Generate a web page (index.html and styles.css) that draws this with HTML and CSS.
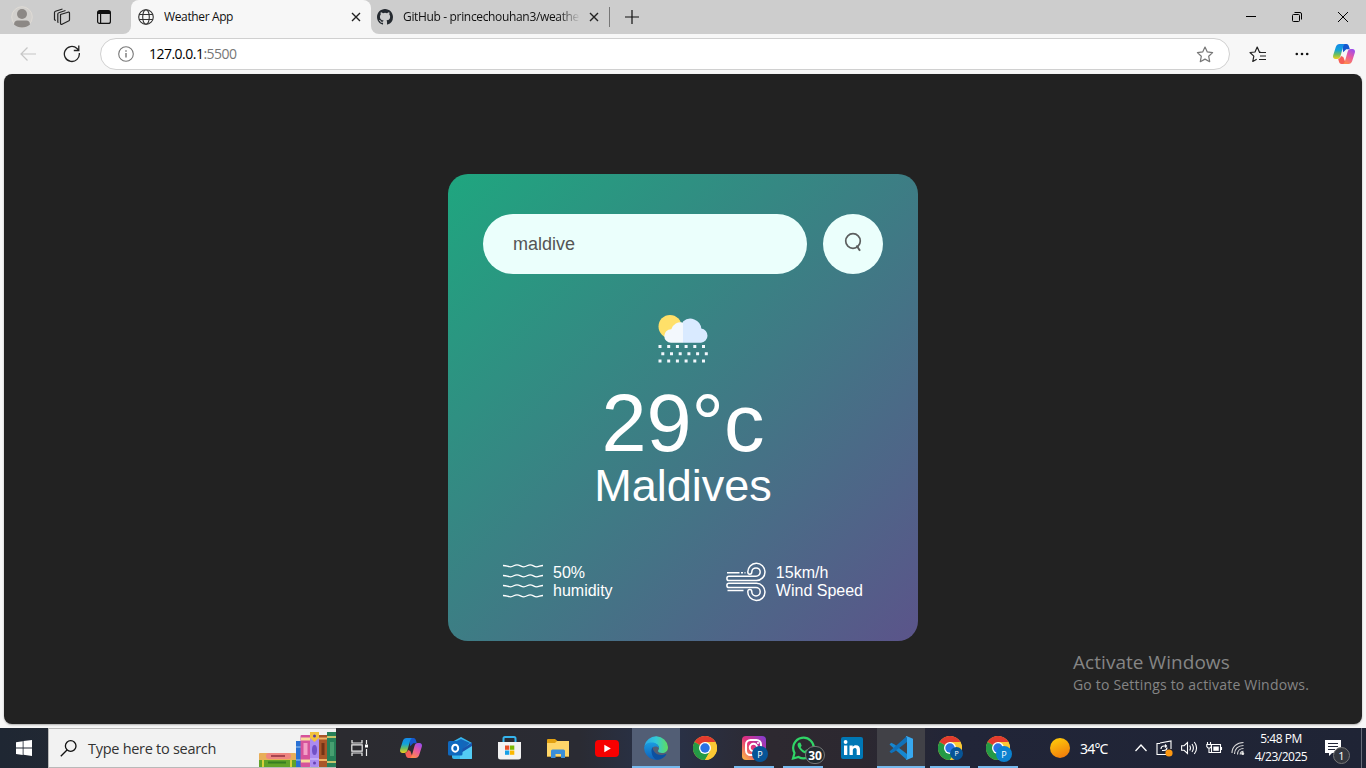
FILE: index.html
```html
<!DOCTYPE html>
<html lang="en">
<head>
<meta charset="utf-8">
<title>Weather App</title>
<link rel="stylesheet" href="styles.css">
</head>
<body>
<svg class="defs" width="0" height="0">
  <defs>
    <linearGradient id="cpA" x1="0" y1="0" x2="0" y2="1"><stop offset="0" stop-color="#1689e8"/><stop offset=".4" stop-color="#12a3d8"/><stop offset=".7" stop-color="#6fbe5c"/><stop offset="1" stop-color="#f2cf1d"/></linearGradient>
    <linearGradient id="cpB" x1=".8" y1="0" x2=".3" y2="1"><stop offset="0" stop-color="#9a4cf0"/><stop offset=".5" stop-color="#e95a9e"/><stop offset="1" stop-color="#ff8a4c"/></linearGradient>
    <linearGradient id="ig" x1="1" y1="0" x2="0" y2="1"><stop offset="0" stop-color="#7a3fd8"/><stop offset=".5" stop-color="#e0307c"/><stop offset="1" stop-color="#ffc140"/></linearGradient>
    <linearGradient id="edgeA" x1="0" y1="0" x2="1" y2="0"><stop offset="0" stop-color="#2aa7e6"/><stop offset=".5" stop-color="#33c9d8"/><stop offset="1" stop-color="#5fdc5c"/></linearGradient>
    <linearGradient id="edgeB" x1="0" y1="0" x2="0" y2="1"><stop offset="0" stop-color="#1a9be0"/><stop offset="1" stop-color="#1160b8"/></linearGradient>
    <linearGradient id="sun" x1=".3" y1="0" x2=".7" y2="1"><stop offset="0" stop-color="#ffc90a"/><stop offset="1" stop-color="#f07a0c"/></linearGradient>
  </defs>
  <symbol id="copilot" viewBox="0 0 22 20">
    <path fill="#1558cf" d="M9 0h4.500c1.500 0 2 1 2.500 2.500l.8 2.700h-3.600l-3 3z"/>
    <path fill="url(#cpA)" d="M6.500 0H12c-1 .5-1.500 1.500-2 3L7.500 12c-.6 2-1.500 3-3.300 3H2.500C.5 15-.4 13.500.2 11.300L2.800 3C3.500 1 4.700 0 6.500 0z"/>
    <path fill="#f65f56" d="M13 20H8.500C7 20 6.300 19 5.900 17.500L5.200 15c1.600-.3 2.300-1.500 2.800-3l2.300 1z"/>
    <path fill="url(#cpB)" d="M15.500 20H10c1-.5 1.500-1.500 2-3l2.500-9c.6-2 1.500-3 3.300-3h1.700c2 0 2.900 1.500 2.300 3.700L19.200 17c-.7 2-1.900 3-3.700 3z"/>
  </symbol>
  <symbol id="chrome" viewBox="0 0 24 24">
    <circle cx="12" cy="12" r="12" fill="#fcc934"/>
    <path fill="#e33b2e" d="M12 12 1.600 6A12 12 0 0 1 22.400 6z"/>
    <path fill="#249a46" d="M1.600 6A12 12 0 0 0 12 24l5.200-9L12 12z"/>
    <path fill="#fcc934" d="M22.400 6H12v6l5.200 3L12 24A12 12 0 0 0 22.400 6z"/>
    <circle cx="12" cy="12" r="6" fill="#fff"/><circle cx="12" cy="12" r="4.700" fill="#2a72e5"/>
  </symbol>
</svg>

<header class="titlebar">
  <div class="title-tools">
    <svg width="22" height="22" viewBox="0 0 22 22"><circle cx="11" cy="11" r="10.300" fill="#d2d0cd" stroke="#dfdbd5"/><circle cx="11" cy="8" r="5" fill="#8c8885"/><path d="M3 18.500c.3-3 1.500-4 3.500-4h9c2 0 3.200 1 3.500 4-4 4-12 4-16 0z" fill="#8c8885"/></svg>
    <svg width="18" height="18" viewBox="0 0 18 18" fill="none" stroke="#222" stroke-width="1.200" stroke-linejoin="round"><path d="M7.500 6.500 15 4.200q1.500-.4 1.500 1v6.500q0 1-1 1.300L9 16.300q-1.500.4-1.500-1z"/><path d="m5.500 14.500-.7-.3V6q0-1 1-1.300L12.500 2.500"/><path d="m2.800 12.500-1.300-.8V4.500q0-1 1-1.300L9.500 1"/></svg>
    <svg width="16" height="16" viewBox="0 0 16 16" fill="none" stroke="#111" stroke-width="1.200"><rect x="1.600" y="1.600" width="12.800" height="12.800" rx="2"/><path d="M2 3.500h12" stroke-width="3"/><path d="M4.600 5v9"/></svg>
  </div>
  <div class="tab active">
    <svg width="16" height="16" viewBox="0 0 16 16" fill="none" stroke="#333" stroke-width="1.100"><circle cx="8" cy="8" r="7.300"/><ellipse cx="8" cy="8" rx="3.300" ry="7.300"/><path d="M1.200 5.500h13.600M1.200 10.500h13.600"/></svg>
    <span class="tab-label">Weather App</span>
    <svg class="x" width="10" height="10" viewBox="0 0 10 10"><path d="m1 1 8 8M9 1 1 9" stroke="#222" stroke-width="1.400"/></svg>
  </div>
  <div class="tab">
    <svg width="16" height="16" viewBox="0 0 16 16"><path fill="#24292f" d="M8 0C3.580 0 0 3.580 0 8c0 3.540 2.290 6.530 5.470 7.590.4.070.55-.17.55-.38v-1.490c-2.010.37-2.530-.49-2.690-.94-.09-.23-.48-.94-.82-1.130-.28-.15-.68-.52-.01-.53.63-.01 1.080.58 1.230.82.72 1.210 1.870.87 2.330.66.07-.52.28-.87.51-1.070-1.780-.2-3.640-.89-3.640-3.950 0-.87.31-1.590.82-2.150-.08-.2-.36-1.020.08-2.120 0 0 .67-.21 2.200.82a7.600 7.600 0 0 1 4 0c1.530-1.040 2.200-.82 2.200-.82.44 1.100.16 1.920.08 2.120.51.56.82 1.270.82 2.150 0 3.070-1.870 3.750-3.650 3.950.29.25.54.73.54 1.480v2.200c0 .21.15.46.55.38A8 8 0 0 0 16 8c0-4.420-3.580-8-8-8z"/></svg>
    <span class="tab-label long">GitHub - princechouhan3/weather</span>
    <svg class="x" width="10" height="10" viewBox="0 0 10 10"><path d="m1 1 8 8M9 1 1 9" stroke="#222" stroke-width="1.400"/></svg>
  </div>
  <div class="newtab"><svg width="14" height="14" viewBox="0 0 14 14"><path d="M7 0v14M0 7h14" stroke="#111" stroke-width="1.200"/></svg></div>
  <div class="win-buttons">
    <svg width="10" height="10" viewBox="0 0 10 10"><path d="M0 4.500h10" stroke="#000"/></svg>
    <svg width="10" height="10" viewBox="0 0 10 10" fill="none" stroke="#000"><rect x=".5" y="2.500" width="7" height="7" rx="1"/><path d="M2.500.5H8q1.500 0 1.500 1.500v5.500"/></svg>
    <svg width="10" height="10" viewBox="0 0 10 10"><path d="m0 0 10 10M10 0 0 10" stroke="#000"/></svg>
  </div>
</header>

<nav class="toolbar">
  <svg class="back" width="16" height="14" viewBox="0 0 16 14" fill="none" stroke="#c6c6c6" stroke-width="1.200"><path d="M16 7H1M7.500.5 1 7l6.500 6.500"/></svg>
  <svg class="reload" width="18" height="18" viewBox="0 0 18 18" fill="none" stroke="#222" stroke-width="1.300"><path d="M16.300 8A7.500 7.500 0 1 1 14 3.500l1.500 1.500M15.800.5V5.500h-5"/></svg>
  <div class="address">
    <svg width="16" height="16" viewBox="0 0 16 16" fill="none" stroke="#777" stroke-width="1.100"><circle cx="8" cy="8" r="7.300"/><path d="M8 7v4.500M8 4.300v1.400" stroke-width="1.400"/></svg>
    <span class="url">127.0.0.1<span class="port">:5500</span></span>
    <svg class="star" width="18" height="17" viewBox="0 0 18 17" fill="none" stroke="#777" stroke-width="1.200" stroke-linejoin="round"><path d="m9 1 2.300 4.900 5.300.7-3.900 3.700 1 5.400L9 13.100l-4.700 2.600 1-5.400L1.400 6.600l5.300-.7z"/></svg>
  </div>
  <svg class="favs" width="17" height="17" viewBox="0 0 17 17" fill="none" stroke="#222" stroke-width="1.200" stroke-linejoin="round"><path d="M11.500 6H10.400L8.200 1 6 6 1 6.500l3.800 3.600-1 5.400 3.900-2.200M10 6.500h7M11 10h6M10 13.500h7"/></svg>
  <svg class="dots" width="14" height="4" viewBox="0 0 14 4" fill="#111"><circle cx="1.800" cy="2" r="1.300"/><circle cx="7" cy="2" r="1.300"/><circle cx="12.200" cy="2" r="1.300"/></svg>
  <svg class="cp" width="22" height="20"><use href="#copilot"/></svg>
</nav>

<main class="page">
  <section class="card">
    <div class="search">
      <div class="field">maldive</div>
      <div class="go"><svg width="18" height="20" viewBox="0 0 18 20" fill="none" stroke="#5c5f5f" stroke-width="1.700"><circle cx="9" cy="9" r="7.300"/><path d="m12.500 13.500 3.500 5.300" stroke-width="2"/></svg></div>
    </div>
    <svg class="condition" width="50" height="50" viewBox="0 0 50 50">
      <circle cx="12" cy="12.500" r="11.500" fill="#ffe069"/>
      <path fill="#d9eaff" d="M25 28.800V7.500A11 11 0 0 1 43.300 14.500a7.200 7.200 0 0 1-.3 14.300z"/>
      <path fill="#f3f8fd" d="M25 28.800H13a6.700 6.700 0 0 1 0-13.500h.3A10 10 0 0 1 25 8.500z"/>
      <g stroke="#f3f8fd" stroke-width="3"><path stroke-dasharray="3 5.700" d="M.5 32.500h49"/><path stroke-dasharray="3 5.700" d="M3.300 39.700H50"/><path stroke-dasharray="3 5.700" d="M.5 47h49"/></g>
    </svg>
    <h1 class="temp">29°c</h1>
    <h2 class="city">Maldives</h2>
    <div class="details">
      <div class="detail">
        <svg width="40" height="40" viewBox="0 0 40 40" fill="none" stroke="#fff" stroke-width="1.300"><path d="M0 3.500c4 0 4.500 1.300 7.500 1.300S11 2.800 14 2.800s4 2 6.800 2 3.700-2 6.500-2 3.500 2 6.200 2S37 3.500 40 3.500"/><path d="M0 13.500c4 0 4.500 1.300 7.500 1.300s3.500-2 6.500-2 4 2 6.800 2 3.700-2 6.500-2 3.500 2 6.200 2S37 13.500 40 13.500"/><path d="M0 23.500c4 0 4.500 1.300 7.500 1.300s3.500-2 6.500-2 4 2 6.800 2 3.700-2 6.500-2 3.500 2 6.200 2S37 23.500 40 23.500"/><path d="M0 33.500c4 0 4.500 1.300 7.500 1.300s3.500-2 6.500-2 4 2 6.800 2 3.700-2 6.500-2 3.500 2 6.200 2S37 33.500 40 33.500"/></svg>
        <p>50%<br>humidity</p>
      </div>
      <div class="detail">
        <svg width="40" height="40" viewBox="0 0 40 40" fill="none" stroke="#fff" stroke-width="1.500"><path d="M1 10.700h12.500M15 10.700h2M18.500 10.700h1M1.500 28.500h16"/><path d="M3 14.300h27a4.200 4.200 0 1 0-4.200-4.200c0 1.300-.8 2.200-2 2.200s-2-.9-2-2.200A8.600 8.600 0 1 1 30.500 18.500H3a2.100 2.100 0 0 1 0-4.200z"/><path d="M3 25.500h27a4.200 4.200 0 1 1-4.200 4.200c0-1.300-.8-2.200-2-2.200s-2 .9-2 2.200A8.600 8.600 0 1 0 30.500 21.300H3a2.100 2.100 0 0 0 0 4.200z"/></svg>
        <p>15km/h<br>Wind Speed</p>
      </div>
    </div>
  </section>
  <aside class="watermark"><div class="wm-title">Activate Windows</div><div class="wm-sub">Go to Settings to activate Windows.</div></aside>
</main>

<footer class="taskbar">
  <div class="start"><svg width="16" height="16" viewBox="0 0 16 16" fill="#fff"><path d="M0 2.200 6.700 1.200V7.600H0zM7.500 1.100 16 0v7.600H7.500zM0 8.400h6.700v6.500L0 13.900zM7.500 8.400H16V16l-8.500-1.200z"/></svg></div>
  <div class="find">
    <svg width="17" height="17" viewBox="0 0 17 17" fill="none" stroke="#111" stroke-width="1.300"><circle cx="10.700" cy="6" r="5.300"/><path d="M7 10 .8 16.300"/></svg>
    <span class="find-text">Type here to search</span>
    <svg class="books" width="77" height="35" viewBox="0 0 77 35">
      <rect y="21" width="37" height="8" rx="1" fill="#e8ae58"/><rect x="7" y="21" width="25" height="6" rx="3" fill="#ef8581"/><path d="M12 24h14" stroke="#a74550" stroke-width="2"/>
      <rect y="28" width="37" height="7" fill="#61a329"/><path d="M4 28v7M32 28v7" stroke="#d6cf3c" stroke-width="2"/><path d="M9 30.500h18" stroke="#357d21" stroke-width="2"/>
      <rect x="37" y="9" width="5" height="26" fill="#2a71d4"/><path d="M37 15h5M37 28h5" stroke="#9bc9f2"/>
      <rect x="41.500" y="3" width="10" height="32" rx="1" fill="#d6539b"/><path d="M42 7h9M42 29h9" stroke="#f7dc9c" stroke-width="3"/><rect x="44.500" y="11" width="4" height="12" fill="#f3a0c7"/>
      <rect x="51" width="9" height="35" rx="1" fill="#ab8cf0"/><path fill="#f2c23e" d="M51 0h9v6l-4.500 4-4.500-4z"/><circle cx="55.500" cy="4" r="1.500" fill="#5c3f9f"/><ellipse cx="55.500" cy="18" rx="2.500" ry="5" fill="#7151c7"/><path d="M51 27h9" stroke="#d8c6ff"/><circle cx="55.500" cy="31" r="1.500" fill="#6743b4"/>
      <rect x="60" y="3" width="8" height="32" fill="#a95629"/><path d="M60 6.500h8M60 28h8" stroke="#efb264" stroke-width="2"/><rect x="62.500" y="11" width="3" height="12" fill="#733417"/>
      <rect x="68" width="9" height="35" fill="#268058"/><path d="M68 5h9M68 30h9" stroke="#c4c56c" stroke-width="2"/><rect x="71" y="10" width="4" height="14" fill="#479f70"/>
    </svg>
  </div>
  <div class="app"><svg width="18" height="16" viewBox="0 0 18 16" fill="none" stroke="#eee" stroke-width="1.200"><path d="M1 0v3h10V0M1 16v-3h10v3M.8 4.800h10.400v6.400H.8zM15.500 0v4M15.500 9v7"/><path d="M14 4.500h3v3h-3z" fill="#fff" stroke="none"/></svg></div>
  <div class="app nudge"><svg width="22" height="20"><use href="#copilot"/></svg></div>
  <div class="app nudge"><svg width="24" height="22" viewBox="0 0 24 22"><path fill="#36b6ed" d="M4 5 13 0l11 6v15q0 1-1 1H6q-2 0-2-2z"/><path fill="#1466ba" d="m4 6 9-4 9 4-8 7H4z"/><path fill="#1a55ad" d="m24 5.500-10 6.500v4L24 10z"/><path fill="#53ccf4" d="m24 9-12 7.500V22h11q1 0 1-1z"/><rect y="4" width="14.500" height="14.500" rx="1.500" fill="#0f68be"/><ellipse cx="7.200" cy="11.200" rx="3" ry="3.500" fill="none" stroke="#fff" stroke-width="2"/></svg></div>
  <div class="app nudge"><svg width="23" height="24" viewBox="0 0 23 24"><path d="M5.500 7V2.500Q5.500 1 7 1h9q1.500 0 1.500 1.500V7" fill="none" stroke="#35b4ed" stroke-width="2"/><path d="M0 6h23v15q0 2.500-2.500 2.500h-18Q0 23.500 0 21z" fill="#f2f2f2"/><path d="M7 9.500h4.300v4.300H7z" fill="#e84e25"/><path d="M12 9.500h4.300v4.300H12z" fill="#7eb900"/><path d="M7 14.500h4.300v4.300H7z" fill="#15a0e8"/><path d="M12 14.500h4.300v4.300H12z" fill="#fbb800"/></svg></div>
  <div class="app nudge"><svg width="22" height="19" viewBox="0 0 22 19"><path d="M0 1q0-1 1-1h7l2.500 2H22v15.500H0z" fill="#e2a111"/><path d="M0 4h8l2-2h12v15.500H0z" fill="#ffd669"/><path d="M4 19v-7q0-1.500 1.500-1.500h11q1.500 0 1.500 1.500v7h-4v-4H8.500v4z" fill="#3a8ed8"/></svg></div>
  <div class="app nudge"><svg width="24" height="17" viewBox="0 0 24 17"><rect width="24" height="17" rx="4" fill="#f70000"/><path fill="#fff" d="m9.300 4.800 6.500 3.700-6.500 3.700z"/></svg></div>
  <div class="app open"><svg width="24" height="24" viewBox="0 0 24 24"><path fill="url(#edgeA)" d="M.3 10A12 12 0 0 1 24 11c0 4-2.500 6-6 6-2 0-4-.8-4-2 0-.8 1-1.200 1-3 0-2.500-2.500-5-7-5-3.500 0-6.500 1.500-7.700 3z"/><path fill="url(#edgeB)" d="M.1 12C.3 8.500 3.500 6.500 8 6.500c4 0 7 2.500 7 5.500-.8-1-2-1.600-3.500-1.600C8.500 10.400 7 13 8 16c1 3.500 4 5 7 5s5.500-1.200 7-2.500A12 12 0 0 1 .1 12z"/><path fill="#0d50a0" d="M8.500 11C6 15 8.500 24 14 23.800c3.500-.4 6.500-2.300 8.300-5.300.2-.5-.2-.8-.7-.5C15 21 9 17 8.500 11z"/></svg></div>
  <div class="app"><svg width="24" height="24"><use href="#chrome"/></svg></div>
  <div class="app run"><svg width="26" height="26" viewBox="0 0 26 26"><rect x="1" y="1" width="24" height="24" rx="4" fill="url(#ig)"/><rect x="5" y="5" width="15" height="15" rx="4.500" fill="none" stroke="#fff" stroke-width="2"/><circle cx="12.500" cy="12.500" r="3.700" fill="none" stroke="#fff" stroke-width="2"/><circle cx="17" cy="8" r="1.100" fill="#fff"/></svg><b class="badge p">P</b></div>
  <div class="app run"><svg width="24" height="24" viewBox="0 0 24 24"><path d="M2 22.500 3.500 17A10.300 10.300 0 1 1 7.500 21z" fill="none" stroke="#30d467" stroke-width="2.200"/><path d="M8 6.500c-2 1-2 3 0 6s5 5 7.500 5 3-2 2.500-2.700l-2.700-1.300-1.400 1.500c-2-.8-3.300-2-4.200-3.800l1-1.400L9.500 6.700z" fill="#30d467"/></svg><b class="badge count">30</b></div>
  <div class="app"><svg width="22" height="22" viewBox="0 0 22 22"><rect width="22" height="22" rx="2" fill="#0077b5"/><path fill="#fff" d="M3 8.500h3.300V18H3zM8.500 8.500h3.200v1.300c.6-1 1.700-1.600 3.200-1.600 3 0 4.100 2 4.100 4.700V18h-3.300v-4.700c0-1.300-.4-2.300-1.700-2.300-1.500 0-2.200 1-2.200 2.400V18H8.500z"/><circle cx="4.600" cy="5" r="1.900" fill="#fff"/></svg></div>
  <div class="app code"><svg width="24" height="24" viewBox="0 0 24 24"><path fill="#1687d0" d="m.5 8.500 1.700-1.700 3 1.500L18 18v6z"/><path fill="#0f71ba" d="m.5 15.500 1.700 1.700 3-1.500L18 6V0z"/><path fill="#37a8ef" d="M17.500 0 24 2.800v18.400L17.500 24l-.8-.5q1.300 0 1.300-1.500V2q0-1.500-1.300-1.500z"/></svg></div>
  <div class="app run"><svg width="24" height="24"><use href="#chrome"/></svg><b class="badge p small">P</b></div>
  <div class="app run last"><svg width="24" height="24"><use href="#chrome"/></svg><b class="badge p bright">P</b></div>
  <div class="weather"><svg width="20" height="20"><circle cx="10" cy="10" r="10" fill="url(#sun)"/></svg><span class="deg">34°C</span></div>
  <div class="tray">
    <svg width="12" height="8" viewBox="0 0 12 8" fill="none" stroke="#fff" stroke-width="1.300"><path d="m.5 7 5.500-6L11.500 7"/></svg>
    <svg width="17" height="17" viewBox="0 0 17 17" fill="none" stroke="#fff" stroke-width="1.100"><path d="M4 3.500H1v11h9M4 3l11-2v8"/><path d="M5 9c0-2 1-3 3-3h2M9 4.500 10.500 6 9 7.500M11 7.500c0 2-1 3-3 3H6"/><circle cx="13" cy="13" r="3.600" fill="#ff9810" stroke="none"/></svg>
    <svg width="17" height="14" viewBox="0 0 17 14" fill="none" stroke="#fff" stroke-width="1.100"><path d="M.6 4.700h2.500L6.500 1.500v11L3.100 9.300H.6zM8.700 4.500q1.500 2.500 0 5M11 3q2.800 4 0 8M13.300 1q4.500 6 0 12"/></svg>
    <svg width="17" height="12" viewBox="0 0 17 12" fill="none" stroke="#fff" stroke-width="1.100"><path d="M5.500 2.500h9v8h-9zM15.500 5v3M1.500 0v2.500M4.500 0v2.500M.8 2.500h4.500v2L4 6H2L.8 4.500zM3 6v4.500h3"/><path fill="#fff" d="M7.300 4.500h5.500v4.300H7.300z" stroke="none"/></svg>
    <svg width="14" height="14" viewBox="0 0 14 14" fill="none" stroke="#ddd" stroke-width="1.100"><path d="M1 12C1 5.500 6 1.500 12.500 1.500M3.500 13C3.500 8 7 4.500 12.500 4.500M6.500 13.500c0-3.500 2.500-6 6-6M9.200 13.500c0-2 1.300-3.300 3.300-3.300"/><circle cx="11.700" cy="12.500" r="1" fill="#fff"/></svg>
  </div>
  <div class="clock"><span class="time">5:48 PM</span><span class="date">4/23/2025</span></div>
  <div class="notice"><svg width="16" height="16" viewBox="0 0 16 16"><path fill="#fff" d="M0 0h16v13H7l-3 3v-3H0z"/><path d="M3 3.500h10M3 6.500h10M3 9.500h7" stroke="#222638"/></svg><b class="badge one">1</b></div>
</footer>
</body>
</html>
```
FILE: styles.css
```css
* { box-sizing: border-box; }
body { margin: 0; width: 1366px; height: 768px; overflow: hidden; display: flex; flex-direction: column; background: #f7f7f7; font-family: "Open Sans", "Noto Sans", sans-serif; color: #111; }
svg { display: block; flex: none; }
.defs { position: absolute; }

.titlebar { height: 34px; flex: none; display: flex; background: linear-gradient(90deg, #cdcdcd 120px, #f7f7f7 120px, #f7f7f7 380px, #cdcdcd 380px); }
.title-tools { width: 131px; display: flex; align-items: center; padding-left: 11px; gap: 20px; background: #cdcdcd; border-bottom-right-radius: 8px; }
.title-tools svg:last-child { margin-left: 5px; }
.titlebar .tab { display: flex; align-items: center; width: 238px; padding-left: 6px; font-size: 12px; background: #cdcdcd; border-bottom-left-radius: 8px; }
.titlebar .tab.active { width: 240px; padding-left: 7px; background: #f7f7f7; border-radius: 8px 8px 0 0; box-shadow: 0 -10px #cdcdcd; }
.tab-label { width: 177px; margin: -2px 0 0 10px; overflow: hidden; white-space: nowrap; letter-spacing: -.37px; }
.x { margin-left: 9px; }
.active .x { margin-left: 10px; }
.long { letter-spacing: -.34px; -webkit-mask-image: linear-gradient(90deg, #000 88%, transparent); mask-image: linear-gradient(90deg, #000 88%, transparent); }
.newtab { display: flex; align-items: center; border-left: 1px solid #777; height: 20px; margin-top: 7px; padding-left: 15px; }
.win-buttons { margin: 0 18px 0 auto; display: flex; align-items: center; gap: 36px; }

.toolbar { height: 40px; flex: none; display: flex; align-items: center; padding-left: 20px; }
.reload { margin-left: 27px; }
.address { width: 1130px; height: 32px; margin-left: 19px; padding: 0 15px 0 17px; display: flex; align-items: center; background: #fff; border: 1px solid #d0d0d0; border-radius: 16px; }
.url { margin: -2px 0 0 15px; font-size: 14px; letter-spacing: -.52px; color: #000; }
.port { color: #777; }
.star { margin-left: auto; }
.favs { margin-left: 19px; }
.dots { margin-left: 29px; }
.cp { margin-left: 24px; }

.page { position: relative; width: 1358px; height: 650px; margin: 0 4px; flex: none; display: flex; justify-content: center; align-items: flex-start; background: #222; border-radius: 8px; box-shadow: 0 1px 2px rgba(0, 0, 0, .3); }
.card { width: 470px; height: 467px; margin-top: 100px; padding: 40px 35px; border-radius: 20px; color: #fff; text-align: center; background: linear-gradient(135deg, #1fa67f, #5b548a); font-family: "Liberation Sans", Arial, sans-serif; }
.search { display: flex; justify-content: space-between; }
.field { width: 324px; height: 60px; padding-left: 30px; border-radius: 30px; background: #ebfffc; color: #555; font-size: 18px; line-height: 60px; text-align: left; }
.go { width: 60px; height: 60px; border-radius: 50%; background: #ebfffc; display: flex; justify-content: center; padding-top: 18px; }
.condition { margin: 40px auto 0; }
.temp { margin: 22px 0 0; font-size: 81px; line-height: 74px; font-weight: 400; }
.city { margin: 0; font-size: 45px; line-height: 52px; font-weight: 400; }
.details { margin-top: 50px; padding: 0 20px; display: flex; justify-content: space-between; text-align: left; }
.detail { display: flex; align-items: center; font-size: 16px; line-height: 18px; }
.detail p { margin: 0 0 0 10px; }
.watermark { position: absolute; left: 1069px; top: 576px; color: #858585; white-space: nowrap; }
.wm-title { font-size: 19px; line-height: 25px; letter-spacing: .05px; }
.wm-sub { font-size: 14px; line-height: 20px; letter-spacing: .19px; }

.taskbar { height: 40px; margin-top: 4px; flex: none; display: flex; color: #fff; background: linear-gradient(90deg, #1f2733 0, #2b2b30 340px, #2a2b33 580px, #28324a 660px, #2d2930 770px, #2c2830 860px, #212538 960px, #1f2435 100%); }
.start { width: 48px; flex: none; display: flex; align-items: center; justify-content: center; }
.find { width: 288px; flex: none; display: flex; align-items: center; padding-left: 11px; background: #f2f2f2; border: 1px solid #b9b9b9; border-right: 0; color: #333; }
.find-text { margin-left: 11px; width: 160px; font-size: 14.500px; letter-spacing: -.28px; white-space: nowrap; }
.books { margin-left: 11px; align-self: flex-end; }
.app { position: relative; width: 48px; margin-right: 1px; flex: none; display: flex; align-items: center; justify-content: center; }
.app.nudge { padding-left: 4px; }
.open { margin-left: 2px; background: #525e75; border-bottom: 2px solid #76b9ed; padding-top: 2px; }
.code { background: #414147; border-bottom: 2px solid #76b9ed; padding-top: 2px; }
.run { background: linear-gradient(#76b9ed, #76b9ed) 4px 38px / 40px 2px no-repeat; }
.last { margin-left: -1px; }
.badge { position: absolute; display: flex; align-items: center; justify-content: center; border-radius: 12px; color: #fff; }
.p { left: 22px; top: 18px; width: 16px; height: 16px; background: #075496; font-size: 9px; font-weight: 400; }
.small { left: 24px; top: 19px; width: 13px; height: 13px; font-size: 7px; }
.bright { background: #0b82d0; top: 18px; }
.count { left: 26px; top: 18px; width: 20px; height: 18px; background: #222b30; border: 1px solid #777; font-size: 12px; }
.weather { width: 107px; padding-left: 27px; display: flex; align-items: center; flex: none; }
.deg { margin-left: 10px; font-family: "Noto Sans", sans-serif; font-size: 14px; letter-spacing: -.8px; }
.tray { display: flex; align-items: center; gap: 8px; margin-left: 5px; }
.tray svg:nth-child(2) { margin-left: 1px; }
.clock { width: 72px; flex: none; display: flex; flex-direction: column; align-items: center; padding-top: 2px; font-size: 12px; line-height: 18px; letter-spacing: -.48px; }
.notice { position: relative; margin-left: auto; width: 41px; flex: none; border-right: 1px solid #686c79; margin-right: 4px; padding: 12px 0 0 4px; }
.one { left: 12px; top: 19px; width: 17px; height: 17px; background: #34373e; border: 1px solid #777; font-size: 11px; font-weight: 400; }
```
